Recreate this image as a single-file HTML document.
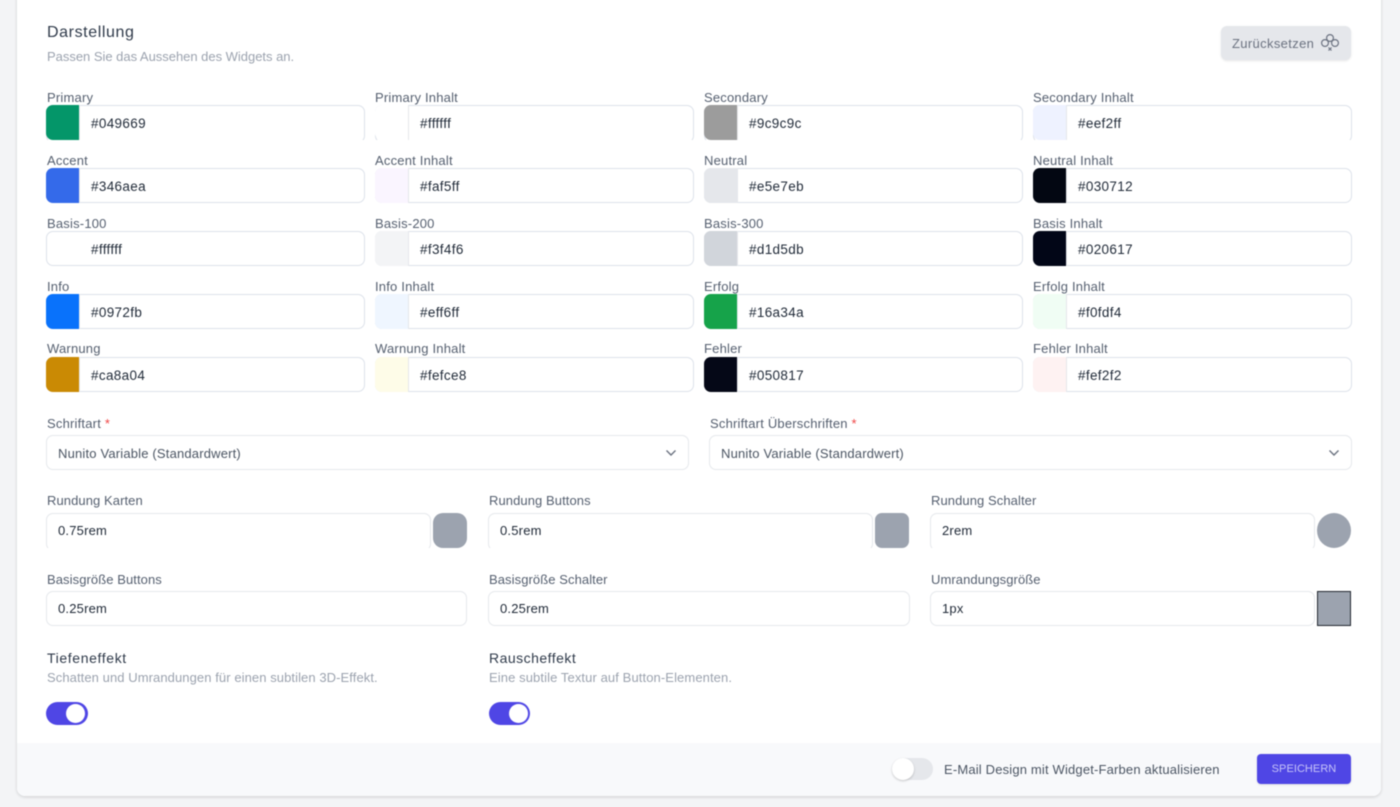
<!DOCTYPE html>
<html lang="de"><head><meta charset="utf-8"><title>Darstellung</title>
<style>
html,body{margin:0;padding:0;width:1400px;height:807px;overflow:hidden;background:#f3f4f6;font-family:"Liberation Sans",sans-serif}
#p{position:relative;width:1400px;height:807px;filter:blur(.5px)}
#card{position:absolute;left:17px;top:-10px;width:1364px;height:806px;background:#fff;border-radius:8px;box-shadow:0 1px 3px rgba(0,0,0,.16);overflow:hidden}
#foot{position:absolute;left:17px;top:743px;width:1364px;height:53px;background:#f8f9fb;border-radius:0 0 8px 8px}
.a{position:absolute;white-space:nowrap}
.l{position:absolute;white-space:nowrap;font-size:13px;line-height:16px;color:#566070;letter-spacing:.2px}
.l2{letter-spacing:.08px}
.t{position:absolute;white-space:nowrap;font-size:13.5px;line-height:16px;color:#1f2937;letter-spacing:.34px;margin-top:1px}
.r{font-size:13px;letter-spacing:.2px;margin-top:0}
.i{position:absolute;box-sizing:border-box;height:35px;border:1px solid #dde2ea;border-radius:7px;background:#fff}
.g{border-color:#e6e8ec}
.c{position:absolute;height:35px;overflow:hidden}
.c .i{left:0;top:0;height:38px}
.s{position:absolute;width:34px;height:34px;border-radius:7px 0 0 7px;border-right:1px solid #e5e7eb;box-sizing:border-box}
.b{position:absolute;width:34px;height:35px;background:#9ca3af}
.tg{position:absolute;width:42px;height:23px;border-radius:12px;background:#4f46e5}
.tg i{position:absolute;left:20px;top:2px;width:19px;height:19px;border-radius:50%;background:#fff}
</style></head><body><div id="p">
<div id="card"></div><div id="foot"></div>

<div class="a" style="left:47px;top:23px;font-size:16px;line-height:20px;color:#2f3a4a;letter-spacing:.6px">Darstellung</div>
<div class="a" style="left:47px;top:49px;font-size:13px;line-height:16px;color:#9ca3af;letter-spacing:-.02px">Passen Sie das Aussehen des Widgets an.</div>

<div class="a" style="left:1221px;top:26px;width:130px;height:34px;background:#e5e7eb;border-radius:6px;box-shadow:0 1px 2px rgba(0,0,0,.1)"></div>
<div class="a" style="left:1232px;top:36px;font-size:13px;line-height:16px;color:#6b7280;letter-spacing:.35px">Zurücksetzen</div>
<svg class="a" style="left:1319px;top:32px" width="22" height="22" viewBox="0 0 22 22" fill="none" stroke="#6b7280" stroke-width="1.2"><circle cx="11" cy="6" r="3.4"/><circle cx="6" cy="11" r="3.4"/><circle cx="16" cy="11" r="3.4"/><path d="M9.5 18.5l3-3M12.5 18.5l-3-3"/></svg>

<!-- row 1 -->
<div class="l" style="left:47px;top:90px">Primary</div>
<div class="c" style="left:46px;top:105px;width:319px"><div class="i" style="width:319px"></div><div class="s" style="left:0;top:0;background:#049669;height:35px"></div></div><div class="t" style="left:91px;top:115px">#049669</div>
<div class="l" style="left:375px;top:90px">Primary Inhalt</div>
<div class="c" style="left:375px;top:105px;width:319px"><div class="i" style="width:319px"></div><div class="s" style="left:0;top:0;background:#fff;height:35px"></div></div><div class="t" style="left:420px;top:115px">#ffffff</div>
<div class="l" style="left:704px;top:90px">Secondary</div>
<div class="c" style="left:704px;top:105px;width:319px"><div class="i" style="width:319px"></div><div class="s" style="left:0;top:0;background:#9c9c9c;height:35px"></div></div><div class="t" style="left:749px;top:115px">#9c9c9c</div>
<div class="l" style="left:1033px;top:90px">Secondary Inhalt</div>
<div class="c" style="left:1033px;top:105px;width:319px"><div class="i" style="width:319px"></div><div class="s" style="left:0;top:0;background:#eef2ff;height:35px"></div></div><div class="t" style="left:1078px;top:115px">#eef2ff</div>

<!-- row 2 -->
<div class="l" style="left:47px;top:153px">Accent</div>
<div class="i" style="left:46px;top:168px;width:319px"></div><div class="s" style="left:46px;top:168px;background:#346aea;height:35px"></div><div class="t" style="left:91px;top:178px">#346aea</div>
<div class="l" style="left:375px;top:153px">Accent Inhalt</div>
<div class="i" style="left:375px;top:168px;width:319px"></div><div class="s" style="left:375px;top:168px;background:#faf5ff;height:35px"></div><div class="t" style="left:420px;top:178px">#faf5ff</div>
<div class="l" style="left:704px;top:153px">Neutral</div>
<div class="i" style="left:704px;top:168px;width:319px"></div><div class="s" style="left:704px;top:168px;background:#e5e7eb;height:35px"></div><div class="t" style="left:749px;top:178px">#e5e7eb</div>
<div class="l" style="left:1033px;top:153px">Neutral Inhalt</div>
<div class="i" style="left:1033px;top:168px;width:319px"></div><div class="s" style="left:1033px;top:168px;background:#030712;height:35px"></div><div class="t" style="left:1078px;top:178px">#030712</div>

<!-- row 3 -->
<div class="l" style="left:47px;top:216px">Basis-100</div>
<div class="i" style="left:46px;top:231px;width:319px"></div><div class="t" style="left:91px;top:241px">#ffffff</div>
<div class="l" style="left:375px;top:216px">Basis-200</div>
<div class="i" style="left:375px;top:231px;width:319px"></div><div class="s" style="left:375px;top:231px;background:#f3f4f6;height:35px"></div><div class="t" style="left:420px;top:241px">#f3f4f6</div>
<div class="l" style="left:704px;top:216px">Basis-300</div>
<div class="i" style="left:704px;top:231px;width:319px"></div><div class="s" style="left:704px;top:231px;background:#d1d5db;height:35px"></div><div class="t" style="left:749px;top:241px">#d1d5db</div>
<div class="l" style="left:1033px;top:216px">Basis Inhalt</div>
<div class="i" style="left:1033px;top:231px;width:319px"></div><div class="s" style="left:1033px;top:231px;background:#020617;height:35px"></div><div class="t" style="left:1078px;top:241px">#020617</div>

<!-- row 4 -->
<div class="l" style="left:47px;top:279px">Info</div>
<div class="i" style="left:46px;top:294px;width:319px"></div><div class="s" style="left:46px;top:294px;background:#0972fb;height:35px"></div><div class="t" style="left:91px;top:304px">#0972fb</div>
<div class="l" style="left:375px;top:279px">Info Inhalt</div>
<div class="i" style="left:375px;top:294px;width:319px"></div><div class="s" style="left:375px;top:294px;background:#eff6ff;height:35px"></div><div class="t" style="left:420px;top:304px">#eff6ff</div>
<div class="l" style="left:704px;top:279px">Erfolg</div>
<div class="i" style="left:704px;top:294px;width:319px"></div><div class="s" style="left:704px;top:294px;background:#16a34a;height:35px"></div><div class="t" style="left:749px;top:304px">#16a34a</div>
<div class="l" style="left:1033px;top:279px">Erfolg Inhalt</div>
<div class="i" style="left:1033px;top:294px;width:319px"></div><div class="s" style="left:1033px;top:294px;background:#f0fdf4;height:35px"></div><div class="t" style="left:1078px;top:304px">#f0fdf4</div>

<!-- row 5 -->
<div class="l" style="left:47px;top:341px">Warnung</div>
<div class="i" style="left:46px;top:357px;width:319px"></div><div class="s" style="left:46px;top:357px;background:#ca8a04;height:35px"></div><div class="t" style="left:91px;top:367px">#ca8a04</div>
<div class="l" style="left:375px;top:341px">Warnung Inhalt</div>
<div class="i" style="left:375px;top:357px;width:319px"></div><div class="s" style="left:375px;top:357px;background:#fefce8;height:35px"></div><div class="t" style="left:420px;top:367px">#fefce8</div>
<div class="l" style="left:704px;top:341px">Fehler</div>
<div class="i" style="left:704px;top:357px;width:319px"></div><div class="s" style="left:704px;top:357px;background:#050817;height:35px"></div><div class="t" style="left:749px;top:367px">#050817</div>
<div class="l" style="left:1033px;top:341px">Fehler Inhalt</div>
<div class="i" style="left:1033px;top:357px;width:319px"></div><div class="s" style="left:1033px;top:357px;background:#fef2f2;height:35px"></div><div class="t" style="left:1078px;top:367px">#fef2f2</div>

<!-- selects -->
<div class="l" style="left:47px;top:416px">Schriftart <span style="color:#ef4444">*</span></div>
<div class="i g" style="left:46px;top:435px;width:643px"></div>
<div class="t" style="left:58px;top:445px;font-size:13px;color:#4b5563;letter-spacing:.18px">Nunito Variable (Standardwert)</div>
<svg class="a" style="left:665px;top:448px" width="12" height="10" viewBox="0 0 12 10" fill="none" stroke="#6b7280" stroke-width="1.4"><path d="M1.5 2.5L6 7l4.5-4.5"/></svg>
<div class="l" style="left:710px;top:416px">Schriftart Überschriften <span style="color:#ef4444">*</span></div>
<div class="i g" style="left:709px;top:435px;width:643px"></div>
<div class="t" style="left:721px;top:445px;font-size:13px;color:#4b5563;letter-spacing:.18px">Nunito Variable (Standardwert)</div>
<svg class="a" style="left:1328px;top:448px" width="12" height="10" viewBox="0 0 12 10" fill="none" stroke="#6b7280" stroke-width="1.4"><path d="M1.5 2.5L6 7l4.5-4.5"/></svg>

<!-- radius -->
<div class="l l2" style="left:47px;top:493px">Rundung Karten</div>
<div class="c" style="left:46px;top:513px;width:385px"><div class="i g" style="width:385px"></div></div>
<div class="t r" style="left:58px;top:523px">0.75rem</div>
<div class="b" style="left:433px;top:513px;border-radius:10px"></div>
<div class="l l2" style="left:489px;top:493px">Rundung Buttons</div>
<div class="c" style="left:488px;top:513px;width:385px"><div class="i g" style="width:385px"></div></div>
<div class="t r" style="left:500px;top:523px">0.5rem</div>
<div class="b" style="left:875px;top:513px;border-radius:7px"></div>
<div class="l l2" style="left:931px;top:493px">Rundung Schalter</div>
<div class="c" style="left:930px;top:513px;width:385px"><div class="i g" style="width:385px"></div></div>
<div class="t r" style="left:942px;top:523px">2rem</div>
<div class="b" style="left:1317px;top:513px;border-radius:50%"></div>

<!-- sizes -->
<div class="l l2" style="left:47px;top:572px">Basisgröße Buttons</div>
<div class="i g" style="left:46px;top:591px;width:421px"></div>
<div class="t r" style="left:58px;top:601px">0.25rem</div>
<div class="l l2" style="left:489px;top:572px">Basisgröße Schalter</div>
<div class="i g" style="left:488px;top:591px;width:422px"></div>
<div class="t r" style="left:500px;top:601px">0.25rem</div>
<div class="l l2" style="left:931px;top:572px">Umrandungsgröße</div>
<div class="i g" style="left:930px;top:591px;width:385px"></div>
<div class="t r" style="left:942px;top:601px">1px</div>
<div class="b" style="left:1317px;top:591px;box-sizing:border-box;border:1px solid #222831"></div>

<!-- effects -->
<div class="a" style="left:47px;top:650px;font-size:14px;line-height:17px;color:#2f3a4a;letter-spacing:.62px">Tiefeneffekt</div>
<div class="a" style="left:47px;top:670px;font-size:13px;line-height:16px;color:#9ca3af;letter-spacing:.08px">Schatten und Umrandungen für einen subtilen 3D-Effekt.</div>
<div class="tg" style="left:46px;top:702px"><i></i></div>
<div class="a" style="left:489px;top:650px;font-size:14px;line-height:17px;color:#2f3a4a;letter-spacing:.48px">Rauscheffekt</div>
<div class="a" style="left:489px;top:670px;font-size:13px;line-height:16px;color:#9ca3af;letter-spacing:.1px">Eine subtile Textur auf Button-Elementen.</div>
<div class="tg" style="left:489px;top:702px;width:41px"><i></i></div>

<!-- footer -->
<div class="a" style="left:892px;top:758px;width:41px;height:22px;border-radius:11px;background:#e5e7eb"></div>
<div class="a" style="left:892px;top:758px;width:22px;height:22px;border-radius:50%;background:#fff;box-shadow:0 1px 2px rgba(0,0,0,.2)"></div>
<div class="a" style="left:944px;top:762px;font-size:13px;line-height:16px;color:#4b5563;letter-spacing:.17px">E-Mail Design mit Widget-Farben aktualisieren</div>
<div class="a" style="left:1257px;top:754px;width:94px;height:30px;background:#4f46e5;border-radius:4px;box-shadow:0 1px 2px rgba(0,0,0,.1);text-align:center;font-size:11px;line-height:31px;color:#c7c4f8;letter-spacing:.05px">SPEICHERN</div>
</div></body></html>
